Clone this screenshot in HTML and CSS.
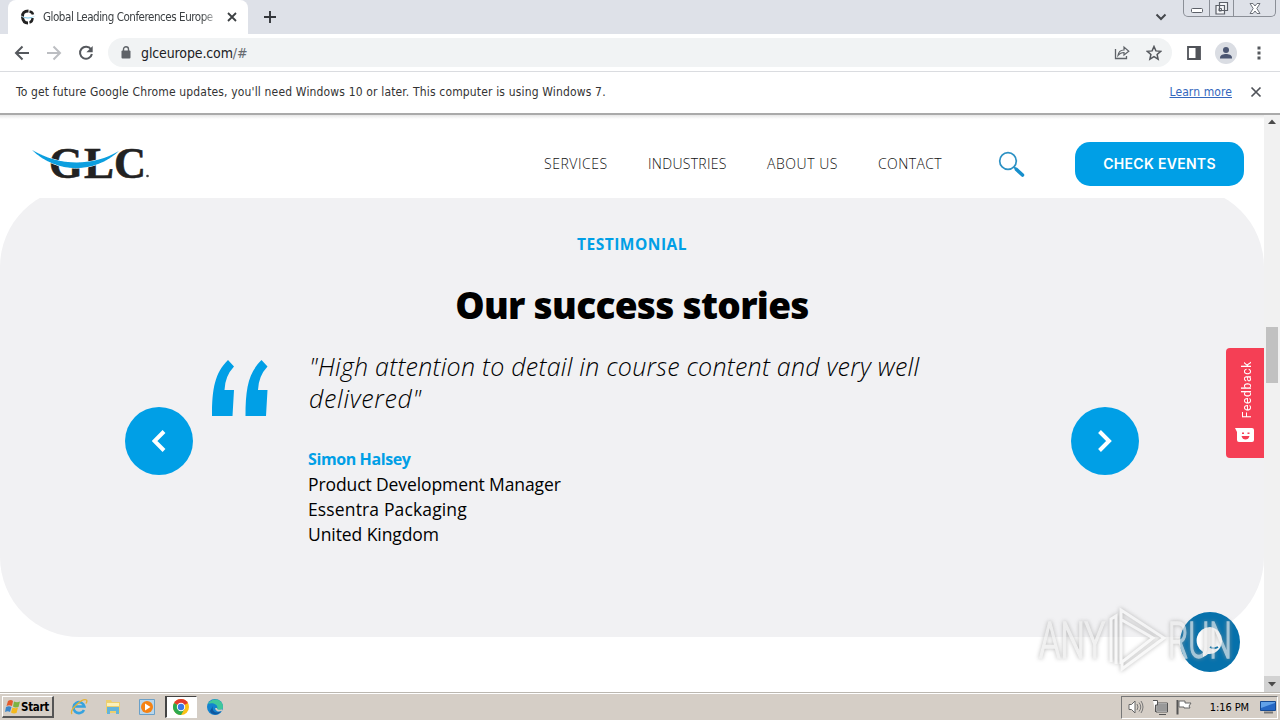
FILE: index.html
```html
<!DOCTYPE html>
<html lang="en">
<head>
  <meta charset="UTF-8">
  <meta name="viewport" content="width=device-width, initial-scale=1.0">
  <title>Global Leading Conferences Europe</title>
  <link rel="stylesheet" href="styles.css">
</head>
<body>

  <!-- Tab strip -->
  <div class="tab-strip">
    <div class="tab">
      <svg class="favicon" width="16" height="16" viewBox="0 0 16 16">
        <path d="M8.500 2Q2 2 2.500 8T8 14" fill="none" stroke="#222" stroke-width="3"/>
        <path d="M9.500 2.500q3 .5 3.500 3M9.500 13.500q3-.5 3-4.500" fill="none" stroke="#222" stroke-width="2.400"/>
        <path d="M0 6.500q8 4 16 0q-8 6-16 0" fill="#1b9fd8" stroke="#fff" stroke-width=".4"/>
      </svg>
      <span class="tab-title">Global Leading Conferences Europe</span>
      <svg width="10" height="10" viewBox="0 0 10 10"><path d="M1 1l8 8M9 1l-8 8" stroke="#3c4043" stroke-width="1.800"/></svg>
    </div>
    <svg class="new-tab" width="14" height="14" viewBox="0 0 14 14"><path d="M7 1v12M1 7h12" stroke="#33363b" stroke-width="1.900"/></svg>
    <svg class="tab-search" width="12" height="8" viewBox="0 0 12 8"><path d="M1.500 1.500L6 6l4.500-4.500" fill="none" stroke="#44474c" stroke-width="2"/></svg>
    <div class="window-buttons">
      <span class="min"><svg width="12" height="5" viewBox="0 0 12 5"><rect x=".5" y=".5" width="11" height="4" rx="1" fill="#fff" stroke="#5c6068"/></svg></span>
      <span class="max"><svg width="14" height="13" viewBox="0 0 14 13"><path d="M4.500.5h8v8h-8zM1 3.500h8.500V12H1z" fill="#f4f5f8" stroke="#5c6068" stroke-width="1.200"/><path d="M4 6.500h2.500V9H4z" fill="none" stroke="#5c6068"/></svg></span>
      <span class="close"><svg width="12" height="11" viewBox="0 0 12 11"><path d="M1 .5h3l2 2.500 2-2.500h3L7.800 5.500l3.200 5H8L6 8l-2 2.500H1l3.200-5z" fill="#fff" stroke="#6c7078"/></svg></span>
    </div>
  </div>

  <!-- Toolbar -->
  <div class="toolbar">
    <svg width="16" height="16" viewBox="0 0 16 16"><path d="M15 8H2M8.500 1.500L2 8l6.500 6.500" fill="none" stroke="#55585d" stroke-width="2"/></svg>
    <svg width="16" height="16" viewBox="0 0 16 16"><path d="M1 8h13M7.500 1.500L14 8l-6.500 6.500" fill="none" stroke="#bcbec2" stroke-width="2"/></svg>
    <svg width="16" height="16" viewBox="0 0 16 16"><path d="M13 4.300A6 6 0 1 0 13.900 9" fill="none" stroke="#55585d" stroke-width="2"/><path d="M14.700 1v6.300H8.400z" fill="#55585d"/></svg>
    <div class="address">
      <svg width="10" height="13" viewBox="0 0 10 13"><rect x=".5" y="4.500" width="9" height="8" rx="1" fill="#5f6368"/><path d="M2.500 5V3.200a2.500 2.500 0 0 1 5 0V5" fill="none" stroke="#5f6368" stroke-width="1.400"/></svg>
      <span class="url">glceurope.com<span>/#</span></span>
      <svg class="share" width="16" height="15" viewBox="0 0 16 15"><path d="M1.500 4v9.500h11V11" fill="none" stroke="#5f6368" stroke-width="1.300"/><path d="M4 10.500c.5-4 3-5.500 6-5.500V2l4.800 4.200L10 10V7.500c-3 0-4.500 1-6 3z" fill="none" stroke="#5f6368" stroke-width="1.200"/></svg>
      <svg width="16" height="16" viewBox="0 0 16 16"><path d="M8 1.500l1.900 4.400 4.800.4-3.600 3.200 1 4.700L8 11.700l-4.100 2.500 1-4.700L1.300 6.300l4.800-.4z" fill="none" stroke="#55585d" stroke-width="1.500"/></svg>
    </div>
    <svg class="panel" width="14" height="14" viewBox="0 0 14 14"><path d="M1 1h12v12H1z" fill="none" stroke="#505359" stroke-width="1.800"/><path d="M8.500 1H13v12H8.500z" fill="#505359"/></svg>
    <svg class="profile" width="22" height="22" viewBox="0 0 22 22"><circle cx="11" cy="11" r="11" fill="#dadde3"/><circle cx="11" cy="8" r="3" fill="#4b5672"/><path d="M5 16.500v-1c0-2.400 3.500-3.500 6-3.500s6 1.100 6 3.500v1z" fill="#4b5672"/></svg>
    <svg class="dots" width="4" height="14" viewBox="0 0 4 14"><path d="M.5.500h3v3h-3zM.5 5.500h3v3h-3zM.5 10.500h3v3h-3z" fill="#55585d"/></svg>
  </div>

  <!-- Update notice -->
  <div class="infobar">
    <span class="infobar-text">To get future Google Chrome updates, you'll need Windows 10 or later. This computer is using Windows 7.</span>
    <a class="learn-more" href="#">Learn more</a>
    <svg width="12" height="12" viewBox="0 0 12 12"><path d="M1.500 1.500l9 9M10.500 1.500l-9 9" stroke="#505359" stroke-width="1.700"/></svg>
  </div>

  <div class="viewport">
    <div class="site">
      <header>
        <svg class="logo" width="120" height="54" viewBox="0 -10 120 54">
          <text class="logo-text" y="31.500">
            <tspan x="17" textLength="34" lengthAdjust="spacingAndGlyphs">G</tspan><tspan x="52" textLength="30" lengthAdjust="spacingAndGlyphs">L</tspan><tspan x="82" textLength="32" lengthAdjust="spacingAndGlyphs">C</tspan>
          </text>
          <path d="M0 4C25 19 58 22 87 5C62 28 25 28 0 4z" fill="#0c9fdf" stroke="#fff" stroke-width="1"/>
          <path d="M0 4C25 19 58 22 87 5C62 28 25 28 0 4z" fill="#0c9fdf"/>
          <circle cx="115.500" cy="30" r="1.300" fill="#444"/>
        </svg>
        <nav>
          <a class="nav-services" href="#">SERVICES</a>
          <a class="nav-industries" href="#">INDUSTRIES</a>
          <a class="nav-about" href="#">ABOUT US</a>
          <a class="nav-contact" href="#">CONTACT</a>
        </nav>
        <svg class="search" width="28" height="28" viewBox="0 0 28 28"><circle cx="10" cy="10" r="8.300" fill="none" stroke="#2c91c4" stroke-width="1.700"/><path d="M16 16l3 3" stroke="#2c91c4" stroke-width="2"/><path d="M18.500 18.500l6 5.500" stroke="#178fcc" stroke-width="3.600" stroke-linecap="round"/></svg>
        <a class="check-events" href="#"><span>CHECK EVENTS</span></a>
      </header>

      <!-- Testimonial Section -->
      <section class="testimonial">
        <h3>TESTIMONIAL</h3>
        <h2>Our success stories</h2>
        <div class="slider">
          <button class="arrow" aria-label="Previous"><svg width="14" height="22" viewBox="0 0 14 22"><path d="M12 1.500L2.500 11l9.500 9.500" fill="none" stroke="#fff" stroke-width="4"/></svg></button>
          <div class="slide">
            <svg class="quote-mark" width="57" height="57" viewBox="0 0 57 57">
              <path id="mark" d="M16 0l6 6.500Q13 16 12.500 30H22l-1.500 26H0C0 28 3 13 16 0z" fill="#009fe6"/>
              <use href="#mark" x="33.500"/>
            </svg>
            <div class="quote">
              <blockquote><span class="line-one">"High attention to detail in course content and very well</span><br><span class="line-two">delivered"</span></blockquote>
              <p class="author">Simon Halsey</p>
              <p class="role">Product Development Manager</p>
              <p class="company">Essentra Packaging</p>
              <p class="country">United Kingdom</p>
            </div>
          </div>
          <button class="arrow" aria-label="Next"><svg width="14" height="22" viewBox="0 0 14 22"><path d="M1.500 1.500L11 11l-9.500 9.500" fill="none" stroke="#fff" stroke-width="4"/></svg></button>
        </div>
      </section>

      <div class="feedback">
        <span>Feedback</span>
        <svg width="20" height="16" viewBox="0 0 20 16"><path d="M0 0h17q2 0 2 2v10q0 2-2 2H4q-2 0-2-2V4z" fill="#fff"/><path d="M7 4.500h2v1.500H7zM12.500 4.500h2v1.500h-2zM6.500 8h8q-1 3.500-4 3.500T6.500 8z" fill="#f53f55"/></svg>
      </div>

      <div class="chat">
        <svg width="30" height="32" viewBox="0 0 30 32"><path d="M15 1a13 13.500 0 1 1-2 27q-2 2-5 3v-5A13.500 13.500 0 0 1 15 1z" fill="#fff"/><path d="M15 21q4 2.500 8 0" fill="none" stroke="#0671ab" stroke-width="2"/></svg>
      </div>

      <svg class="watermark" width="212" height="72" viewBox="0 0 212 72">
        <g class="watermark-text">
          <text x="5" y="52" textLength="66" lengthAdjust="spacingAndGlyphs">ANY</text>
          <text x="134" y="52" textLength="64" lengthAdjust="spacingAndGlyphs">RUN</text>
        </g>
        <path class="watermark-play" d="M77 56V13l5-3v48M87 58V4l43 28-42 31v-7l31-24-31-18"/>
      </svg>
    </div>

    <div class="scrollbar">
      <svg width="8" height="5" viewBox="0 0 8 5"><path d="M0 5l4-4.500L8 5z" fill="#4a4a4a"/></svg>
      <div class="thumb"></div>
      <div class="scroll-down"><svg width="8" height="5" viewBox="0 0 8 5"><path d="M0 0l4 4.500L8 0z" fill="#4a4a4a"/></svg></div>
    </div>
  </div>

  <!-- Taskbar -->
  <footer>
    <div class="start">
      <svg width="16" height="15" viewBox="0 0 16 15"><path d="M3 2q3-2 5 0L7 7Q4 5.500 1.500 7z" fill="#e45b2c"/><path d="M9 2.500q3 1.500 6 0L13.500 8Q10 9 8 7.500z" fill="#7cb342"/><path d="M1 8q3-1.500 5.500 0l-1.500 5Q3 11.500 0 13z" fill="#3b86ca"/><path d="M7.500 8.500q3 1.500 5.500 0L11.500 14q-3 1-5.500-.5z" fill="#f4b91d"/></svg>
      <span>Start</span>
    </div>
    <div class="task"><svg width="18" height="18" viewBox="0 0 18 18"><path d="M14 12a5.500 5.500 0 1 1 .4-3.500H5" fill="none" stroke="#36a3df" stroke-width="2.600"/><path d="M2 16C-1 12 12 0 16.500 2c1 .8 0 2.500-.5 3.500" fill="none" stroke="#e5b232" stroke-width="1.300"/></svg></div>
    <div class="task"><svg width="16" height="16" viewBox="0 0 16 16"><path d="M1 1h5l1 2h8v11H1z" fill="#edcf6e"/><path d="M2 4h12v3H2z" fill="#fbf0b8"/><path d="M2 15V8h12v7h-3v-3H5v3z" fill="#63b4da"/></svg></div>
    <div class="task"><svg width="16" height="16" viewBox="0 0 16 16"><path d="M.5.500h15v15H.5z" fill="#b9d6eb" stroke="#6aa0c8"/><circle cx="8" cy="8" r="6" fill="#f58213"/><path d="M6 4.500v7L11.500 8z" fill="#fff"/></svg></div>
    <div class="task active"><svg width="16" height="16" viewBox="0 0 16 16"><circle cx="8" cy="8" r="8" fill="#fbc116"/><path d="M8 8L1.070 4A8 8 0 0 1 14.930 4z" fill="#e33b2e"/><path d="M8 8L1.070 4A8 8 0 0 0 8 16l3.500-6z" fill="#2da94f"/><circle cx="8" cy="8" r="4.200" fill="#fff"/><circle cx="8" cy="8" r="3.200" fill="#3b78e7"/></svg></div>
    <div class="task"><svg width="17" height="16" viewBox="0 0 17 16"><circle cx="8" cy="8" r="8" fill="#1383cf"/><path d="M1 5C4-2 16-1 16 8c0 3-4 4-6 2 2-4-4-7-9-5z" fill="#3fc79c"/><path d="M6 7c-2 6 4 8 8 5-2 5-10 4-11 0z" fill="#0f579f"/><path d="M9 9c0 3 3 3 6 2" fill="none" stroke="#d5cec6" stroke-width="1.800"/></svg></div>

    <div class="tray">
      <svg width="16" height="16" viewBox="0 0 16 16"><path d="M1 5.500h2.500L7 2v12l-3.500-3.500H1z" fill="#fff" stroke="#666"/><path d="M9 5q2 3 0 6M11 3.500q3.500 4.500 0 9M13 2q4 6 0 12" fill="none" stroke="#777"/></svg>
      <svg width="16" height="16" viewBox="0 0 16 16"><path d="M4.500 4.500h11v8h-11z" fill="#999" stroke="#fff"/><path d="M4 4h11.500v9H4zM7 15.500h7" fill="none" stroke="#555"/><path d="M1 1.500h4.500V6H3.500v7" fill="#fff" stroke="#555"/></svg>
      <svg width="16" height="16" viewBox="0 0 16 16"><path d="M1.500 1v14.500" stroke="#555" stroke-width="2"/><path d="M3 2h6v2h6l-2 3 1 2H8V8H3z" fill="#fff" stroke="#666"/></svg>
      <span class="clock">1:16 PM</span>
      <svg width="16" height="13" viewBox="0 0 16 13"><path d="M.5.500h15v9H.5z" fill="#2667c4" stroke="#174a92"/><path d="M1 7L15 2V1H1z" fill="#62a1e8"/><path d="M4 11.500h9" stroke="#777" stroke-width="2"/></svg>
    </div>
  </footer>

</body>
</html>
```
FILE: styles.css
```css
:root {
  --brand: #009fe6;
  --section-bg: #f1f1f3;
  --taskbar: #d5cec6;
  --ui-font: "DejaVu Sans Condensed", "DejaVu Sans", sans-serif;
  --site-font: "Open Sans", "Noto Sans", sans-serif;
}

* {
  box-sizing: border-box;
}

body {
  display: flex;
  flex-direction: column;
  width: 1280px;
  height: 720px;
  margin: 0;
  overflow: hidden;
  background: #fff;
  font-family: var(--site-font);
}

svg {
  display: block;
  flex: none;
}

a {
  color: inherit;
  text-decoration: none;
}

/* Browser */
.tab-strip {
  display: flex;
  align-items: center;
  height: 34px;
  padding-left: 8px;
  background: #dee1e8;
}

.tab {
  display: flex;
  align-items: center;
  width: 240px;
  height: 34px;
  padding-left: 12px;
  border-radius: 8px 8px 0 0;
  background: #fff;
}

.tab-title {
  width: 172px;
  margin: 0 12px 0 7px;
  color: #3c4043;
  font: 11.5px var(--ui-font);
  letter-spacing: -0.45px;
  white-space: nowrap;
  -webkit-mask-image: linear-gradient(to right, #000 92%, transparent 104%);
}

.new-tab {
  margin-left: 15px;
}

.tab-search {
  margin-left: auto;
}

.window-buttons {
  display: flex;
  align-self: flex-start;
  height: 17px;
  margin: 0 4px 0 16px;
  border: 1px solid #8b8f97;
  border-top: 0;
  border-radius: 0 0 5px 5px;
}

.window-buttons span {
  display: flex;
  align-items: center;
  justify-content: center;
  width: 25px;
}

.window-buttons .min {
  padding-top: 5px;
}

.window-buttons .max {
  border: solid #8b8f97;
  border-width: 0 1px;
}

.window-buttons .close {
  width: 41px;
}

.toolbar {
  display: flex;
  align-items: center;
  height: 38px;
  padding: 0 19px 0 14px;
  border-bottom: 1px solid #dadce0;
  gap: 16px;
}

.address {
  display: flex;
  align-items: center;
  flex: 1;
  height: 29px;
  margin-left: -2px;
  padding: 0 10px 0 13px;
  border-radius: 15px;
  background: #f1f3f4;
}

.url {
  margin-left: 10px;
  color: #202124;
  font: 14px var(--ui-font);
  letter-spacing: -0.12px;
}

.url span {
  color: #666a6f;
}

.share {
  margin: 0 16px 0 auto;
}

.panel {
  margin-left: -1px;
}

.profile {
  margin-left: -2px;
}

.dots {
  margin-left: 4px;
}

.infobar {
  display: flex;
  align-items: center;
  height: 43px;
  padding: 0 18px 1px 16px;
  border-bottom: 2px solid #aaa;
  color: #333;
  font: 12px var(--ui-font);
}

.infobar-text {
  letter-spacing: 0.157px;
}

.learn-more {
  margin: 0 18px 0 auto;
  color: #3467bd;
  letter-spacing: 0.1px;
  text-decoration: underline;
}

/* Site */
.viewport {
  display: flex;
  height: 577px;
}

.site {
  position: relative;
  width: 1264px;
  overflow: hidden;
}

header {
  position: relative;
  z-index: 1;
  display: flex;
  align-items: center;
  height: 83px;
  padding: 0 20px 0 32px;
  background: linear-gradient(#e6e6e6, #fff 4px);
}

.logo {
  margin-top: 13px;
}

.logo-text {
  fill: #222;
  stroke: #222;
  stroke-width: 0.6px;
  font: bold 44px "Liberation Serif", serif;
}

nav {
  display: flex;
  margin: 14px 0 0 392px;
  color: #111;
  font-size: 14px;
  font-weight: 300;
  line-height: 20px;
  white-space: nowrap;
}

nav a {
  margin-right: 40px;
}

.nav-services {
  width: 64px;
  letter-spacing: 0.55px;
}

.nav-industries {
  width: 79px;
  letter-spacing: 0.3px;
}

.nav-about {
  width: 71px;
  letter-spacing: 0.55px;
}

.nav-contact {
  width: 64px;
  letter-spacing: 0.4px;
}

.search {
  margin: 16px 0 0 16px;
}

.check-events {
  width: 169px;
  height: 44px;
  margin: 14px 0 0 auto;
  border-radius: 15px;
  background: var(--brand);
  color: #fff;
  font: 600 14px/44px Inter, sans-serif;
  letter-spacing: 0.3px;
  text-align: center;
}

.testimonial {
  height: 450px;
  margin-top: -11px;
  padding-top: 46px;
  border-radius: 80px;
  background: var(--section-bg);
}

.testimonial h3 {
  margin: 0;
  color: var(--brand);
  font-size: 15.5px;
  letter-spacing: 0.5px;
  line-height: 22px;
  text-align: center;
}

.testimonial h2 {
  margin: 24px 0 0;
  font-size: 37px;
  font-weight: 800;
  letter-spacing: -0.7px;
  line-height: 52px;
  text-align: center;
}

.slider {
  display: flex;
  justify-content: space-between;
  margin-top: 20px;
  padding: 0 125px;
}

.arrow {
  display: flex;
  align-items: center;
  justify-content: center;
  width: 68px;
  height: 68px;
  margin-top: 56px;
  padding: 0;
  border: 0;
  border-radius: 50%;
  background: var(--brand);
}

.slide {
  display: flex;
  flex: 1;
  padding-left: 19px;
}

.quote-mark {
  margin-top: 9px;
}

.quote {
  margin: -1px 0 0 39px;
  font-size: 17.5px;
  line-height: 25px;
  white-space: nowrap;
}

.quote p {
  margin: 0;
}

blockquote {
  margin: 0 0 33px 1px;
  font-size: 25px;
  font-style: italic;
  font-weight: 300;
  line-height: 32px;
}

.line-one {
  letter-spacing: 0.25px;
}

.line-two {
  letter-spacing: 0.7px;
}

.quote .author {
  color: var(--brand);
  font-size: 16px;
  font-weight: 700;
  letter-spacing: -0.4px;
}

.role {
  letter-spacing: -0.1px;
}

.company {
  letter-spacing: 0.14px;
}

.country {
  letter-spacing: -0.08px;
}

.feedback {
  position: absolute;
  top: 233px;
  right: 0;
  display: flex;
  flex-direction: column;
  align-items: center;
  justify-content: space-between;
  width: 38px;
  height: 110px;
  padding: 13px 0 14px;
  border-radius: 4px 0 0 4px;
  background: #f53f55;
  color: #fff;
}

.feedback span {
  margin-left: 3px;
  font: 12px Roboto, sans-serif;
  letter-spacing: 0.7px;
  transform: rotate(180deg);
  writing-mode: vertical-rl;
}

.chat {
  position: absolute;
  right: 24px;
  bottom: 20px;
  display: flex;
  align-items: center;
  justify-content: center;
  width: 60px;
  height: 60px;
  border-radius: 50%;
  background: #0671ab;
}

.watermark {
  position: absolute;
  right: 18px;
  bottom: 14px;
  opacity: 0.7;
  filter: drop-shadow(0 0 2px #999);
}

.watermark-text {
  fill: #ececec;
  stroke: #ececec;
  stroke-width: 1.5px;
  font: 300 50px Roboto, sans-serif;
}

.watermark-play {
  fill: none;
  stroke: #f6f6f6;
  stroke-width: 3;
}

.scrollbar {
  display: flex;
  flex-direction: column;
  align-items: center;
  width: 16px;
  padding-top: 4px;
  background: #f1f1f1;
}

.thumb {
  width: 12px;
  height: 56px;
  margin-top: 203px;
  background: #c1c1c1;
}

.scroll-down {
  display: flex;
  align-items: center;
  justify-content: center;
  width: 16px;
  height: 16px;
  margin-top: auto;
  background: #d2d2d2;
}

/* Taskbar */
footer {
  display: flex;
  align-items: center;
  height: 28px;
  padding: 1px 2px 0;
  border-top: 1px solid #bbb7b0;
  background: var(--taskbar);
  box-shadow: inset 0 1px #fff;
}

.start {
  display: flex;
  align-items: center;
  width: 52px;
  height: 22px;
  margin-right: 9px;
  padding-left: 2px;
  border: solid;
  border-width: 1px 2px 2px 1px;
  border-color: #fff #555 #555 #fff;
  font: bold 11.5px var(--ui-font);
}

.start span {
  letter-spacing: -0.3px;
}

.task {
  display: flex;
  align-items: center;
  justify-content: center;
  width: 32px;
  height: 22px;
  margin-right: 2px;
}

.task.active {
  padding-right: 2px;
  border: 1px solid #fff;
  border-top-color: #444;
  border-left: 2px solid #444;
  background: #fff;
}

.tray {
  display: flex;
  align-items: center;
  width: 157px;
  height: 23px;
  margin-left: auto;
  padding: 0 1px 0 6px;
  border: 1px solid;
  border-color: #777 #fff #fff #777;
  gap: 8px;
}

.clock {
  margin: 0 3px 0 auto;
  font: 11px var(--ui-font);
  letter-spacing: -0.1px;
  white-space: nowrap;
}
```
